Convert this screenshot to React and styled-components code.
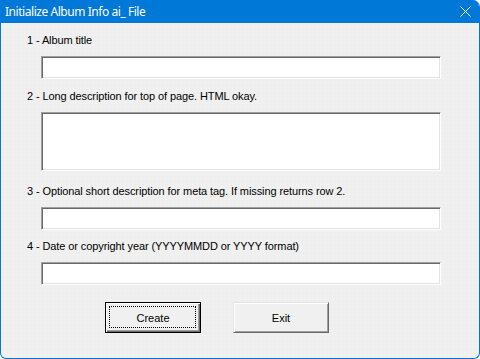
import React from 'react';
import styled, { createGlobalStyle } from 'styled-components';

const GlobalStyle = createGlobalStyle`
  html, body {
    margin: 0;
    padding: 0;
    background: #ffffff;
  }
`;

const Window = styled.div`
  width: 480px;
  height: 359px;
  box-sizing: border-box;
  border: 1px solid #0078d7;
  border-top: none;
  border-radius: 0 7px 6px 6px;
  overflow: hidden;
  display: flex;
  flex-direction: column;
  background-color: #f0f0f0;
`;

const TitleBar = styled.div`
  height: 23px;
  flex: 0 0 23px;
  margin: 0 -1px;
  background: #0078d7;
  display: flex;
  align-items: center;
  justify-content: space-between;
  padding: 0 9px 0 5px;
  color: #ffffff;
  font-family: "Noto Sans", "Open Sans", sans-serif;
  font-size: 12px;
`;

const Title = styled.span`
  line-height: 23px;
  letter-spacing: -0.45px;
`;

const CloseIcon = styled.svg`
  width: 11px;
  height: 11px;
  display: block;
`;

const Body = styled.div`
  flex: 1;
  padding: 10px 0 0 25px;
  background-image: radial-gradient(circle, #e8e8e8 0.5px, transparent 0.8px);
  background-size: 4px 4px;
`;

const Label = styled.div`
  height: 14px;
  line-height: 14px;
  margin-top: ${p => p.$gap}px;
  padding-left: 1px;
  font-family: "Liberation Sans", Arial, sans-serif;
  font-size: 11px;
  letter-spacing: -0.1px;
  color: #000000;
  white-space: nowrap;
`;

const Input = styled.div`
  box-sizing: border-box;
  width: 400px;
  height: ${p => p.$h}px;
  margin: 9px 0 0 15px;
  background: #ffffff;
  border-top: 1px solid #a0a0a0;
  border-left: 1px solid #a0a0a0;
  border-right: 1px solid #ffffff;
  border-bottom: 1px solid #ffffff;
  box-shadow: inset 1px 1px 0 #696969, inset -1px -1px 0 #e3e3e3;
`;

const Buttons = styled.div`
  display: flex;
  gap: 32px;
  margin: 17px 0 0 79px;
`;

const Button = styled.div`
  box-sizing: border-box;
  width: 96px;
  height: 31px;
  display: flex;
  align-items: center;
  justify-content: center;
  position: relative;
  background: #f0f0f0;
  font-family: "Liberation Sans", Arial, sans-serif;
  font-size: 11px;
  color: #000000;
  border: 1px solid ${p => (p.$default ? '#000000' : '#e3e3e3')};
  ${p => p.$default
    ? `box-shadow: inset 1px 1px 0 #ffffff, inset -1px -1px 0 #696969, inset -2px -2px 0 #a0a0a0;`
    : `border-right-color: #696969; border-bottom-color: #696969;
       box-shadow: inset 1px 1px 0 #ffffff, inset -1px -1px 0 #a0a0a0;`}
`;

const Focus = styled.span`
  position: absolute;
  inset: 3px 4px 4px 3px;
  border: 1px dotted #000000;
`;

const fields = [
  { label: '1 - Album title', h: 23, gap: 0 },
  { label: '2 - Long description for top of page. HTML okay.', h: 59, gap: 10 },
  { label: '3 - Optional short description for meta tag. If missing returns row 2.', h: 23, gap: 13 },
  { label: '4 - Date or copyright year (YYYYMMDD or YYYY format)', h: 23, gap: 9 },
];

export default function App() {
  return (
    <>
      <GlobalStyle />
      <Window>
        <TitleBar>
          <Title>Initialize Album Info ai_ File</Title>
          <CloseIcon viewBox="0 0 11 11">
            <path d="M0.5 0.5 L10.5 10.5 M10.5 0.5 L0.5 10.5" stroke="#ffffff" strokeWidth="1" fill="none" />
          </CloseIcon>
        </TitleBar>
        <Body>
          {fields.map(f => (
            <React.Fragment key={f.label}>
              <Label $gap={f.gap}>{f.label}</Label>
              <Input $h={f.h} />
            </React.Fragment>
          ))}
          <Buttons>
            <Button $default>
              <Focus />
              Create
            </Button>
            <Button>Exit</Button>
          </Buttons>
        </Body>
      </Window>
    </>
  );
}
